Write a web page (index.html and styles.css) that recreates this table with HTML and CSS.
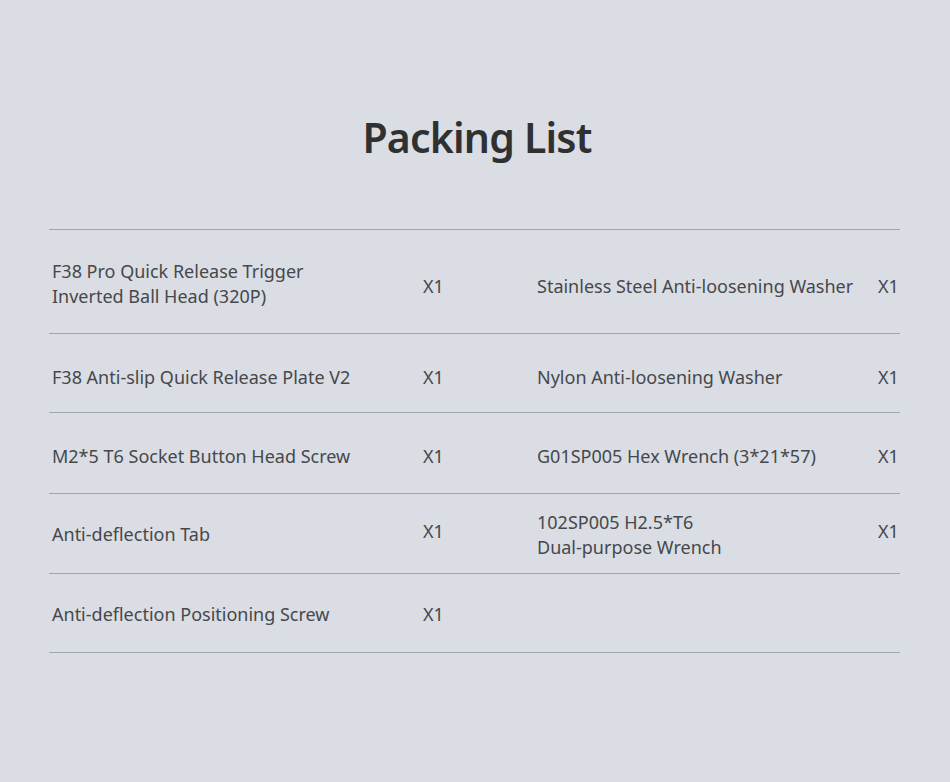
FILE: index.html
```html
<!DOCTYPE html>
<html lang="en">
<head>
<meta charset="utf-8">
<title>Packing List</title>
<link rel="stylesheet" href="styles.css">
</head>
<body>
<main class="page">
  <h1 class="title">Packing List</h1>
  <div class="list">
    <div class="row row-tall">
      <div class="name name-up">F38 Pro Quick Release Trigger<br>Inverted Ball Head (320P)</div>
      <div class="qty">X1</div>
      <div class="name">Stainless Steel Anti-loosening Washer</div>
      <div class="qty">X1</div>
    </div>
    <div class="row row-79">
      <div class="name">F38 Anti-slip Quick Release Plate V2</div>
      <div class="qty">X1</div>
      <div class="name">Nylon Anti-loosening Washer</div>
      <div class="qty">X1</div>
    </div>
    <div class="row row-81">
      <div class="name">M2*5 T6 Socket Button Head Screw</div>
      <div class="qty">X1</div>
      <div class="name">G01SP005 Hex Wrench (3*21*57)</div>
      <div class="qty">X1</div>
    </div>
    <div class="row row-80">
      <div class="name">Anti-deflection Tab</div>
      <div class="qty qty-up">X1</div>
      <div class="name">102SP005 H2.5*T6<br>Dual-purpose Wrench</div>
      <div class="qty qty-up">X1</div>
    </div>
    <div class="row row-last">
      <div class="name">Anti-deflection Positioning Screw</div>
      <div class="qty">X1</div>
      <div class="name"></div>
      <div class="qty"></div>
    </div>
  </div>
</main>
</body>
</html>
```

FILE: styles.css
```css
html, body {
  margin: 0;
  padding: 0;
  background: #dadde4;
}

.page {
  width: 950px;
  height: 782px;
  padding-top: 111px;
  box-sizing: border-box;
  font-family: "Noto Sans", "Liberation Sans", sans-serif;
  color: #46484b;
}

.title {
  margin: 0;
  height: 118px;
  text-align: center;
  font-size: 41px;
  line-height: 52px;
  font-weight: 600;
  color: #2f3032;
  letter-spacing: -0.8px;
  padding-left: 4px;
}

.list {
  margin: 0 50px 0 49px;
  border-top: 1px solid #9ea6ae;
}

.row {
  display: grid;
  grid-template-columns: 371px 114px 341px 1fr;
  align-items: center;
  padding-left: 3px;
  padding-top: 6px;
  box-sizing: border-box;
  border-bottom: 1px solid #9ea6ae;
}

.row-tall { height: 104px; padding-top: 10px; }
.row-79 { height: 79px; padding-top: 8px; }
.row-81 { height: 81px; }
.row-80 { height: 80px; padding-top: 2px; }
.row-last { height: 79px; padding-top: 2px; }

.name-up { margin-top: -5px; }
.qty-up { margin-top: -6px; }

.name {
  font-size: 18px;
  line-height: 25px;
  white-space: nowrap;
}

.qty {
  font-size: 18px;
  line-height: 25px;
}
```
